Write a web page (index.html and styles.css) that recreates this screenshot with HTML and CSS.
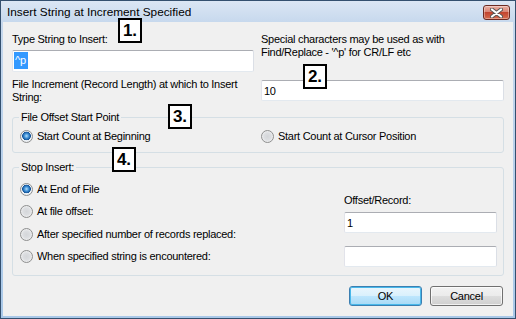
FILE: index.html
```html
<!DOCTYPE html>
<html lang="en">
<head>
    <meta charset="UTF-8">
    <meta name="viewport" content="width=device-width, initial-scale=1.0">
    <title>Insert String at Increment Specified</title>
    <link rel="stylesheet" href="styles.css">
</head>
<body>
    <div class="window">
        <div class="titlebar">
            <span class="title">Insert String at Increment Specified</span>
            <button class="close" title="Close">
                <svg width="13" height="10" viewBox="0 0 13 10">
                    <path d="M2 1.5 11 8.5M11 1.5 2 8.5" stroke="#555" stroke-width="4" stroke-linecap="round" fill="none"/>
                    <path d="M2 1.5 11 8.5M11 1.5 2 8.5" stroke="#fff" stroke-width="2.2" stroke-linecap="round" fill="none"/>
                </svg>
            </button>
        </div>
        <div class="dialog">
            <div class="top">
                <div class="col">
                    <label class="text">Type String to Insert:</label>
                    <div class="field field-main"><span class="sel">^p</span></div>
                    <label class="text label-inc">File Increment (Record Length) at which to Insert String:</label>
                </div>
                <div class="col">
                    <p class="text note">Special characters may be used as with<br>Find/Replace - '^p' for CR/LF etc</p>
                    <input class="field field-inc" type="text" value="10">
                </div>
            </div>

            <fieldset class="group group-start">
                <legend>File Offset Start Point</legend>
                <label class="option"><input class="radio" type="radio" name="start" checked>Start Count at Beginning</label>
                <label class="option"><input class="radio" type="radio" name="start">Start Count at Cursor Position</label>
            </fieldset>

            <fieldset class="group group-stop">
                <legend>Stop Insert:</legend>
                <div class="options">
                    <label class="option"><input class="radio" type="radio" name="stop" checked>At End of File</label>
                    <label class="option"><input class="radio" type="radio" name="stop">At file offset:</label>
                    <label class="option"><input class="radio" type="radio" name="stop">After specified number of records replaced:</label>
                    <label class="option"><input class="radio" type="radio" name="stop">When specified string is encountered:</label>
                </div>
                <div class="offset">
                    <span class="text">Offset/Record:</span>
                    <input class="field field-rec" type="text" value="1">
                    <input class="field field-str" type="text" value="">
                </div>
            </fieldset>

            <div class="actions">
                <button class="btn btn-default">OK</button>
                <button class="btn">Cancel</button>
            </div>
        </div>

        <!-- numbered callouts -->
        <span class="tag tag-1">1.</span>
        <span class="tag tag-2">2.</span>
        <span class="tag tag-3">3.</span>
        <span class="tag tag-4">4.</span>
    </div>
</body>
</html>
```

FILE: styles.css
```css
body {
    margin: 0;
    background-color: #fff;
    font-family: "Liberation Sans", Arial, sans-serif;
}
.window {
    position: relative;
    width: 516px;
    height: 319px;
    box-sizing: border-box;
    border: 1px solid #34506f;
    background: linear-gradient(#dbe6f4, #c6d8ed 22px, #a9c8e8);
    padding: 0 2px 2px;
    display: flex;
    flex-direction: column;
}
.titlebar {
    height: 21px;
    display: flex;
    align-items: flex-start;
    justify-content: space-between;
    padding-left: 4px;
}
.title {
    font-size: 11.8px;
    line-height: 14px;
    margin-top: 4px;
    color: #000;
}
.close {
    width: 27px;
    height: 15px;
    margin: 4px 3px 0 0;
    padding: 0;
    border: 1px solid #6b2a22;
    border-radius: 3px;
    background: linear-gradient(#eab0a4, #d98474 45%, #c2442f 50%, #d66b4e);
    box-shadow: inset 0 0 0 1px rgba(255, 255, 255, 0.35);
    display: flex;
    align-items: center;
    justify-content: center;
}
.dialog {
    flex: 1;
    background-color: #f0f0f0;
    padding: 11px 9px 0;
    font-size: 11px;
    letter-spacing: -0.27px;
    color: #000;
}
.text {
    display: block;
    line-height: 13px;
}
.top {
    display: grid;
    grid-template-columns: 242px 243px;
    column-gap: 7px;
}
.col {
    display: flex;
    flex-direction: column;
}
.note {
    margin: 0;
}
.field {
    box-sizing: border-box;
    height: 21px;
    margin: 0;
    padding: 0 2px;
    border: 1px solid;
    border-color: #abadb3 #dbdfe6 #e3e9ef #e2e3ea;
    border-radius: 2px;
    background-color: #fff;
    font: inherit;
    letter-spacing: inherit;
    color: #000;
    outline: none;
}
.field-main {
    height: 22px;
    margin-top: 4px;
    padding: 1px 0 0 1px;
}
.sel {
    display: inline-block;
    height: 17px;
    line-height: 17px;
    padding: 0 2px 0 1px;
    background-color: #3399ff;
    color: #fff;
}
.label-inc {
    margin-top: 6px;
}
.field-inc {
    margin-top: 21px;
}
.group {
    margin: 0;
    border: 1px solid #d5dfe5;
    border-radius: 3px;
    min-width: 0;
}
.group legend {
    padding: 0 2px;
    margin-left: -1px;
    line-height: 13px;
}
.group-start {
    margin-top: 7px;
    padding: 6px 0 9px 7px;
    display: grid;
    grid-template-columns: 241px 1fr;
}
.group-stop {
    margin-top: 8px;
    padding: 8.5px 6px 8px 7px;
    display: flex;
    justify-content: space-between;
}
.option {
    display: flex;
    align-items: center;
    gap: 4px;
    height: 13px;
    line-height: 13px;
}
.options {
    display: flex;
    flex-direction: column;
    gap: 9.6px;
}
.radio {
    appearance: none;
    -webkit-appearance: none;
    box-sizing: border-box;
    width: 13px;
    height: 13px;
    margin: 0;
    border: 1px solid #8e8f8f;
    border-radius: 50%;
    background: radial-gradient(circle, #d4d6d9 0, #dcdee1 45%, #f3f3f3 80%, #fbfbfb 100%);
}
.radio:checked {
    background: radial-gradient(circle at 50% 45%, #b6e0fa 0, #3d8fd6 28%, #145396 50%, #eef2f6 56%, #e4e6e8 100%);
}
.offset {
    width: 153px;
    display: flex;
    flex-direction: column;
    margin-top: 11px;
}
.field-rec {
    margin-top: 5.5px;
}
.field-str {
    margin-top: 13px;
}
.actions {
    display: flex;
    justify-content: flex-end;
    gap: 8px;
    margin-top: 10px;
    padding-right: 1px;
}
.btn {
    width: 73px;
    height: 20px;
    padding: 0;
    border: 1px solid #707070;
    border-radius: 3px;
    background: linear-gradient(#f2f2f2, #ebebeb 50%, #dddddd 50%, #cfcfcf);
    box-shadow: inset 0 0 0 1px rgba(255, 255, 255, 0.7);
    font: inherit;
    letter-spacing: inherit;
    color: #000;
}
.btn-default {
    border-color: #3c7fb1;
    background: linear-gradient(#eaf6fd, #d9f0fc 50%, #bee6fd 50%, #a7d9f5);
    box-shadow: inset 0 0 0 1px #48b8ea;
}
.tag {
    position: absolute;
    box-sizing: border-box;
    width: 24px;
    height: 25px;
    border: 2px solid #000;
    background-color: #fff;
    font-size: 17px;
    font-weight: bold;
    line-height: 21px;
    text-align: center;
}
.tag-1 {
    left: 117px;
    top: 17px;
}
.tag-2 {
    left: 302px;
    top: 63px;
}
.tag-3 {
    left: 167px;
    top: 103px;
}
.tag-4 {
    left: 111px;
    top: 146px;
}
```
